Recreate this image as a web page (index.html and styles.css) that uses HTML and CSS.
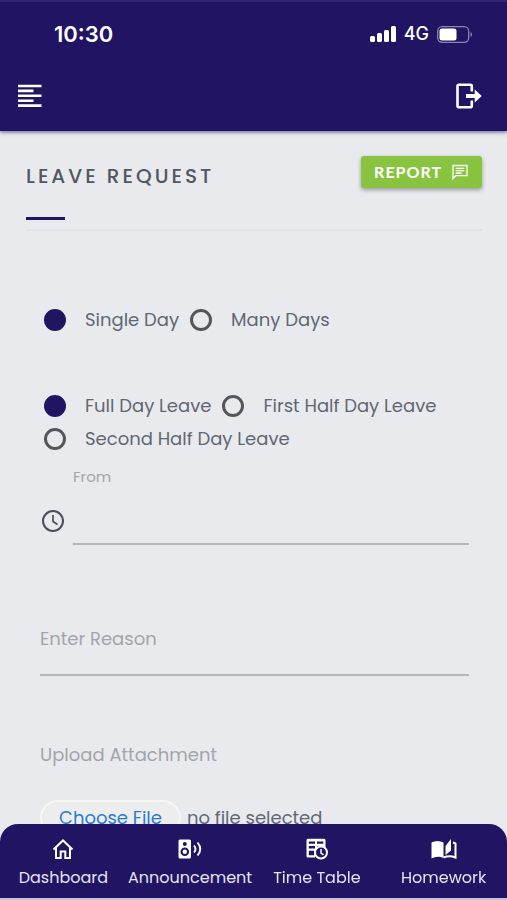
FILE: index.html
```html
<!DOCTYPE html>
<html lang="en">
<head>
<meta charset="utf-8">
<meta name="viewport" content="width=device-width, initial-scale=1">
<title>Leave Request</title>
<link rel="stylesheet" href="styles.css">
</head>
<body>
<header class="top">
  <div class="status">
    <span class="time">10:30</span>
    <div class="signals">
      <svg width="26" height="16" viewBox="0 0 26 16" fill="#fff" aria-hidden="true"><rect x="0" y="10" width="5" height="6" rx="1.5"/><rect x="7" y="7" width="5" height="9" rx="1.5"/><rect x="14" y="4" width="5" height="12" rx="1.5"/><rect x="21" y="0" width="5" height="16" rx="1.5"/></svg>
      <span class="network">4G</span>
      <svg width="36" height="17" viewBox="0 0 36 17" aria-hidden="true"><rect x=".7" y=".7" width="31" height="15.600" rx="4.500" fill="none" stroke="#8b83b5" stroke-width="1.300"/><rect x="2.500" y="2.500" width="17" height="12" rx="2.500" fill="#fff"/><path d="M33.500 6v5c2-.8 2-4.200 0-5z" fill="#8b83b5"/></svg>
    </div>
  </div>
  <div class="toolbar">
    <button class="icon-btn" type="button" aria-label="Menu">
      <svg width="24" height="24" viewBox="0 0 24 24" fill="#fff"><path d="M0 .7h23.500v2.600H0zM0 5.600h15.500v2.600H0zM0 10.500h23.500v2.600H0zM0 15.400h15.500V18H0zM0 20.300h23.500v2.600H0z"/></svg>
    </button>
    <button class="icon-btn" type="button" aria-label="Log out">
      <svg width="26" height="26" viewBox="0 0 26 26"><path d="M15.800 8.500V3.200Q15.800 1.700 14.300 1.700H3Q1.500 1.700 1.500 3.200V22.800Q1.500 24.300 3 24.300H14.300Q15.800 24.300 15.800 22.800V17.500" fill="none" stroke="#fff" stroke-width="2.600"/><path d="M10 10.900h8.700V6.500l7.100 6.500-7.100 6.500v-4.400H10z" fill="#fff"/></svg>
    </button>
  </div>
</header>

<main class="page">
  <div class="heading">
    <h1 class="title">LEAVE REQUEST</h1>
    <button class="report" type="button">REPORT
      <svg width="16" height="16" viewBox="0 0 16 16" fill="none" stroke="#fff" stroke-width="1.300" aria-hidden="true"><path d="M1 14.500V1.500h14v10.200H3.800zM3.700 4.400h8.600M3.700 6.700h8.600M3.700 9h6"/></svg>
    </button>
  </div>

  <form class="form">
    <div class="choices">
      <label class="choice"><input type="radio" name="days" checked>Single Day</label>
      <label class="choice"><input type="radio" name="days">Many Days</label>
    </div>
    <div class="choices">
      <label class="choice"><input type="radio" name="part" checked>Full Day Leave</label>
      <label class="choice"><input type="radio" name="part">First Half Day Leave</label>
      <label class="choice"><input type="radio" name="part">Second Half Day Leave</label>
    </div>
    <div class="from">
      <svg class="clock" width="24" height="24" viewBox="0 0 24 24" fill="none" stroke="#4a4e5b" stroke-width="2" aria-hidden="true"><circle cx="12" cy="12" r="10"/><path d="M12 6v6.500l4.500 3" stroke-width="1.700"/></svg>
      <div class="from-field">
        <label class="from-label" for="from">From</label>
        <input class="line-input" id="from" type="text">
      </div>
    </div>
    <input class="line-input reason" type="text" placeholder="Enter Reason" aria-label="Enter Reason">
    <div class="upload-title">Upload Attachment</div>
    <div class="upload">
      <input class="file" id="file" type="file">
      <label class="choose" for="file">Choose File</label>
      <span>no file selected</span>
    </div>
  </form>
</main>

<nav class="tabs">
  <a class="tab" href="#dashboard">
    <svg width="22" height="22" viewBox="0 0 22 22" fill="none" stroke="#fff" stroke-width="2" aria-hidden="true"><path d="M1.500 11.500L11 2.500l9.500 9M4 9.500V20h4.700v-6.500h4.600V20H18V9.500"/></svg>
    Dashboard
  </a>
  <a class="tab" href="#announcement">
    <svg width="24" height="22" viewBox="0 0 24 22" aria-hidden="true"><path fill="#fff" fill-rule="evenodd" d="M2 1.500h9.500q1.500 0 1.500 1.500v16q0 1.500-1.500 1.500H2Q.5 20.500.5 19V3Q.5 1.500 2 1.500zM6.800 4a2 2 0 1 0 0 4 2 2 0 0 0 0-4zM6.800 9.500a4.300 4.300 0 1 0 0 8.600 4.300 4.300 0 0 0 0-8.600z"/><circle cx="6.800" cy="13.800" r="2.200" fill="#fff"/><path d="M16 7.500q3 3.500 0 7M19.500 4.500q5.500 6.500 0 13" fill="none" stroke="#fff" stroke-width="1.900"/></svg>
    Announcement
  </a>
  <a class="tab" href="#timetable">
    <svg width="22" height="22" viewBox="0 0 22 22" aria-hidden="true"><path fill="#fff" fill-rule="evenodd" d="M2 .7h16q1.500 0 1.500 1.500V11h-9L9 19.500H2Q.5 19.500.5 18V2.200Q.5.700 2 .7zM2.800 3.500v2.300H9V3.500zM11 3.500v2.300h6.300V3.500zM2.800 8v2.500H9V8zM11 8v2.500h6.300V8zM2.800 12.700v4.500H8v-4.500z"/><circle cx="15" cy="14.500" r="6" fill="#201463" stroke="#fff" stroke-width="2"/><path d="M15 11v4l2.500 1.800" fill="none" stroke="#fff" stroke-width="1.500"/></svg>
    Time Table
  </a>
  <a class="tab" href="#homework">
    <svg width="26" height="22" viewBox="0 0 26 22" aria-hidden="true"><path d="M.5 4.500Q6.500 1.500 12.500 4.500V20Q6.500 17.300.5 20.500z" fill="#fff"/><path d="M12.500 19.500Q18.500 17 24.500 19.500V5" fill="none" stroke="#fff" stroke-width="2"/><path d="M14.500 8L20 1v11.500L14.500 17z" fill="#fff"/><path d="M22 4.500l2.500.8" stroke="#fff" stroke-width="2"/></svg>
    Homework
  </a>
</nav>
</body>
</html>
```
FILE: styles.css
```css
* {
  box-sizing: border-box;
}

body {
  margin: 0;
  background: #e9eaee;
  color: #5f6773;
  font-family: Poppins, Inter, "Open Sans", sans-serif;
  font-size: 18px;
  line-height: 24px;
}

button,
input {
  font: inherit;
}

.top {
  padding-bottom: 5px;
  background: #201463;
  border-top: 2px solid #30256f;
  box-shadow: 0 1px 4px rgba(32, 20, 99, 0.7);
  color: #fff;
}

.status {
  display: flex;
  align-items: center;
  justify-content: space-between;
  height: 64px;
  padding: 0 34px 0 54px;
}

.time {
  font-family: Inter, sans-serif;
  font-size: 22px;
  font-weight: 600;
}

.signals {
  display: flex;
  align-items: center;
  gap: 8px;
}

.network {
  font-family: Inter, sans-serif;
  font-weight: 500;
}

.toolbar {
  display: flex;
  align-items: center;
  justify-content: space-between;
  height: 60px;
  padding: 0 25px 0 18px;
}

.icon-btn {
  display: flex;
  padding: 0;
  border: 0;
  background: none;
}

.page {
  padding: 25px 25px 80px 26px;
}

.heading {
  display: flex;
  align-items: flex-start;
  justify-content: space-between;
  height: 75px;
  border-bottom: 2px solid #e2e2e7;
}

.title {
  display: flex;
  flex-direction: column;
  justify-content: space-between;
  height: 64px;
  margin: 0;
  padding-top: 8px;
  color: #4f5860;
  font-size: 20px;
  font-weight: 500;
  letter-spacing: 3px;
}

.title::after {
  content: "";
  width: 39px;
  height: 3px;
  background: #201463;
}

.report {
  display: flex;
  align-items: center;
  gap: 10px;
  height: 32px;
  padding: 0 14px 0 13px;
  border: 0;
  border-radius: 3px;
  background: #89c440;
  box-shadow: 0 2px 4px rgba(0, 0, 0, 0.35);
  color: #fff;
  font-family: Lato, sans-serif;
  font-size: 16px;
  font-weight: 700;
  letter-spacing: 1px;
}

.form {
  padding: 72px 13px 0 14px;
}

.choices {
  display: flex;
  flex-wrap: wrap;
  column-gap: 11px;
  margin-bottom: 53px;
  padding-left: 4px;
}

.choices + .choices {
  margin-bottom: 12px;
}

.choice {
  display: flex;
  align-items: center;
  gap: 19px;
  height: 33px;
}

.choice input {
  appearance: none;
  width: 22px;
  height: 22px;
  margin: 0;
  border: 3px solid #56545c;
  border-radius: 50%;
}

.choice input:checked {
  border-color: #201463;
  background: #201463;
}

.from {
  display: flex;
  align-items: flex-end;
  gap: 8px;
  padding-left: 1px;
}

.clock {
  margin-bottom: 12px;
}

.from-field {
  flex: 1;
}

.from-label {
  display: block;
  height: 20px;
  color: #a3a4ab;
  font-size: 15px;
  line-height: 20px;
}

.line-input {
  display: block;
  width: 100%;
  height: 58px;
  padding: 0;
  border: 0;
  border-bottom: 2px solid #b7b6bd;
  border-radius: 0;
  outline: 0;
  background: none;
  color: #5f6773;
}

.line-input::placeholder {
  color: #a3a4ab;
  opacity: 1;
}

.reason {
  height: 74px;
  margin-top: 57px;
}

.upload-title {
  margin-top: 67px;
  color: #a3a4ab;
}

.upload {
  display: flex;
  align-items: center;
  gap: 6px;
  margin-top: 33px;
}

.file {
  position: absolute;
  width: 1px;
  height: 1px;
  opacity: 0;
}

.choose {
  padding: 4px 17px;
  border: 2px solid #f6f6f4;
  border-radius: 18px;
  background: #ededee;
  color: #2a7bd0;
}

.tabs {
  position: fixed;
  right: 0;
  bottom: 0;
  left: 0;
  display: grid;
  grid-template-columns: repeat(4, 1fr);
  height: 76px;
  padding-top: 14px;
  border-bottom: 2px solid #c9c4dc;
  border-radius: 18px 18px 0 0;
  background: #201463;
}

.tab {
  display: flex;
  flex-direction: column;
  align-items: center;
  gap: 6px;
  color: #e6e3f2;
  font-size: 16px;
  text-decoration: none;
}
```
